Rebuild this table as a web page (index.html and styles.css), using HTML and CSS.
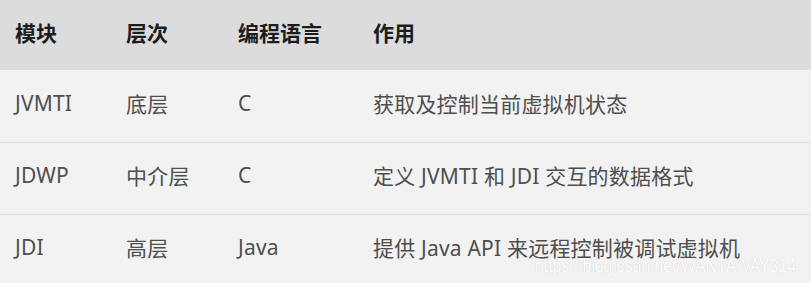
FILE: index.html
```html
<!DOCTYPE html>
<html lang="zh">
<head>
<meta charset="utf-8">
<link rel="stylesheet" href="styles.css">
</head>
<body>
<div class="wrap">
<table class="tbl">
  <colgroup>
    <col class="c1"><col class="c2"><col class="c3"><col class="c4">
  </colgroup>
  <thead>
    <tr><th>模块</th><th>层次</th><th>编程语言</th><th>作用</th></tr>
  </thead>
  <tbody>
    <tr><td>JVMTI</td><td>底层</td><td>C</td><td>获取及控制当前虚拟机状态</td></tr>
    <tr><td>JDWP</td><td>中介层</td><td>C</td><td>定义 JVMTI 和 JDI 交互的数据格式</td></tr>
    <tr><td>JDI</td><td>高层</td><td>Java</td><td>提供 Java API 来远程控制被调试虚拟机</td></tr>
  </tbody>
</table>
<div class="watermark">https://blog.csdn.net/WANTAWAY314</div>
</div>
</body>
</html>
```
FILE: styles.css
```css
html, body {
  margin: 0;
  padding: 0;
  background: #f2f2f2;
}
.wrap {
  position: relative;
  width: 811px;
  height: 283px;
  overflow: hidden;
}
.tbl {
  width: 811px;
  border-collapse: collapse;
  table-layout: fixed;
  font-family: "Noto Sans", "Noto Sans CJK SC", sans-serif;
  font-size: 21px;
}
.c1 { width: 111px; }
.c2 { width: 112px; }
.c3 { width: 135px; }
.tbl th {
  background: #dcdcdc;
  color: #1c1c1c;
  font-weight: bold;
  text-align: left;
  height: 70px;
  padding: 0 0 6px 15px;
  box-sizing: border-box;
  font-family: "Noto Sans CJK SC", sans-serif;
  font-size: 21px;
}
.tbl td {
  background: #f2f2f2;
  color: #4e4e4e;
  height: 72px;
  padding: 0 0 6px 15px;
  box-sizing: border-box;
  vertical-align: middle;
  border-bottom: 1px solid #dadada;
  letter-spacing: 0.2px;
}
.tbl tbody tr:last-child td { border-bottom: none; }
.watermark {
  position: absolute;
  left: 535px;
  top: 256px;
  font-family: "Liberation Sans", Arial, sans-serif;
  font-size: 18px;
  color: #ffffff;
  text-shadow: 0 0 1px #c4c4c4;
  white-space: nowrap;
  transform: scaleX(0.877);
  transform-origin: left top;
}
```
